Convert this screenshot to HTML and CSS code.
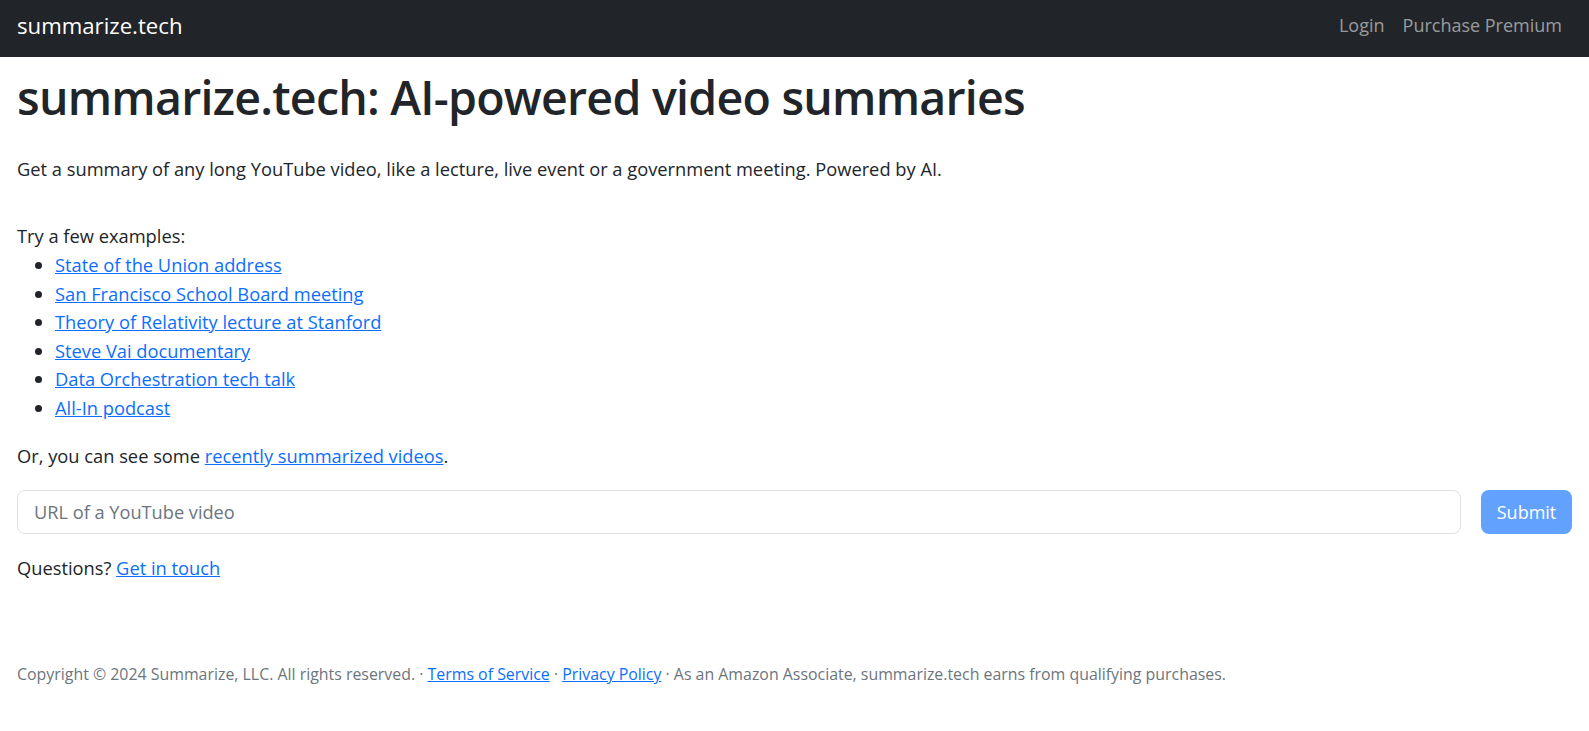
FILE: index.html
```html
<!DOCTYPE html>
<html lang="en">
<head>
<meta charset="utf-8">
<title>summarize.tech: AI-powered video summaries</title>
<link rel="stylesheet" href="styles.css">
</head>
<body>
<nav class="navbar">
  <a class="brand" href="#">summarize.tech</a>
  <div class="nav-links">
    <a class="nav-link" href="#">Login</a>
    <a class="nav-link" href="#">Purchase Premium</a>
  </div>
</nav>
<main class="main">
  <h1 class="title">summarize.tech: AI-powered video summaries</h1>
  <p class="lead">Get a summary of any long YouTube video, like a lecture, live event or a government meeting. Powered by AI.</p>
  <p class="examples-label">Try a few examples:</p>
  <ul class="examples">
    <li><a href="#">State of the Union address</a></li>
    <li><a href="#">San Francisco School Board meeting</a></li>
    <li><a href="#">Theory of Relativity lecture at Stanford</a></li>
    <li><a href="#">Steve Vai documentary</a></li>
    <li><a href="#">Data Orchestration tech talk</a></li>
    <li><a href="#">All-In podcast</a></li>
  </ul>
  <p class="recent">Or, you can see some <a href="#">recently summarized videos</a>.</p>
  <form class="url-form">
    <input class="url-input" type="text" placeholder="URL of a YouTube video">
    <button class="submit" type="button" disabled>Submit</button>
  </form>
  <p class="questions">Questions? <a href="#">Get in touch</a></p>
</main>
<footer class="footer">
  Copyright © 2024 Summarize, LLC. All rights reserved. · <a href="#">Terms of Service</a> · <a href="#">Privacy Policy</a> · As an Amazon Associate, summarize.tech earns from qualifying purchases.
</footer>
</body>
</html>
```

FILE: styles.css
```css
* { box-sizing: border-box; }
html, body { margin: 0; padding: 0; }
body {
  font-family: "Open Sans", "Noto Sans", sans-serif;
  font-size: 18.3px;
  line-height: 28.5px;
  color: #212529;
  background: #fff;
}
a { color: #0d6efd; text-decoration: underline; }

.navbar {
  height: 57px;
  background: #212529;
  display: flex;
  align-items: center;
  justify-content: space-between;
  padding: 0 17px 6px;
}
.brand {
  color: #fff;
  text-decoration: none;
  font-size: 22.2px;
  line-height: 30px;
}
.nav-links { display: flex; gap: 2px; }
.nav-link {
  color: rgba(255,255,255,.55);
  text-decoration: none;
  font-size: 18px;
  padding: 0 8px;
}
.nav-links .nav-link:last-child { padding-right: 10px; }

.main { padding: 0 17px; }
.title {
  margin: 12px 0 0;
  font-size: 46.5px;
  font-weight: 600;
  letter-spacing: -0.75px;
  line-height: 56px;
}
.lead { margin: 30px 0 0; }
.examples-label { margin: 38px 0 0; }
.examples { margin: 1px 0 0; padding-left: 38px; }
.recent { margin: 20px 0 0; }
.url-form {
  display: flex;
  gap: 20px;
  margin-top: 19px;
}
.url-input {
  flex: 1;
  height: 44px;
  border: 1px solid #dee2e6;
  border-radius: 8px;
  padding: 0 16px;
  font-family: inherit;
  font-size: 18.2px;
  color: #212529;
}
.url-input::placeholder { color: #6c757d; }
.submit {
  width: 91px;
  height: 44px;
  border: none;
  border-radius: 8px;
  background: #62a1fe;
  color: #fff;
  font-family: inherit;
  font-size: 18px;
}
.questions { margin: 20px 0 0; }
.footer {
  padding: 0 17px;
  margin-top: 80px;
  font-size: 15.9px;
  line-height: 24px;
  color: #6c757d;
}
```
